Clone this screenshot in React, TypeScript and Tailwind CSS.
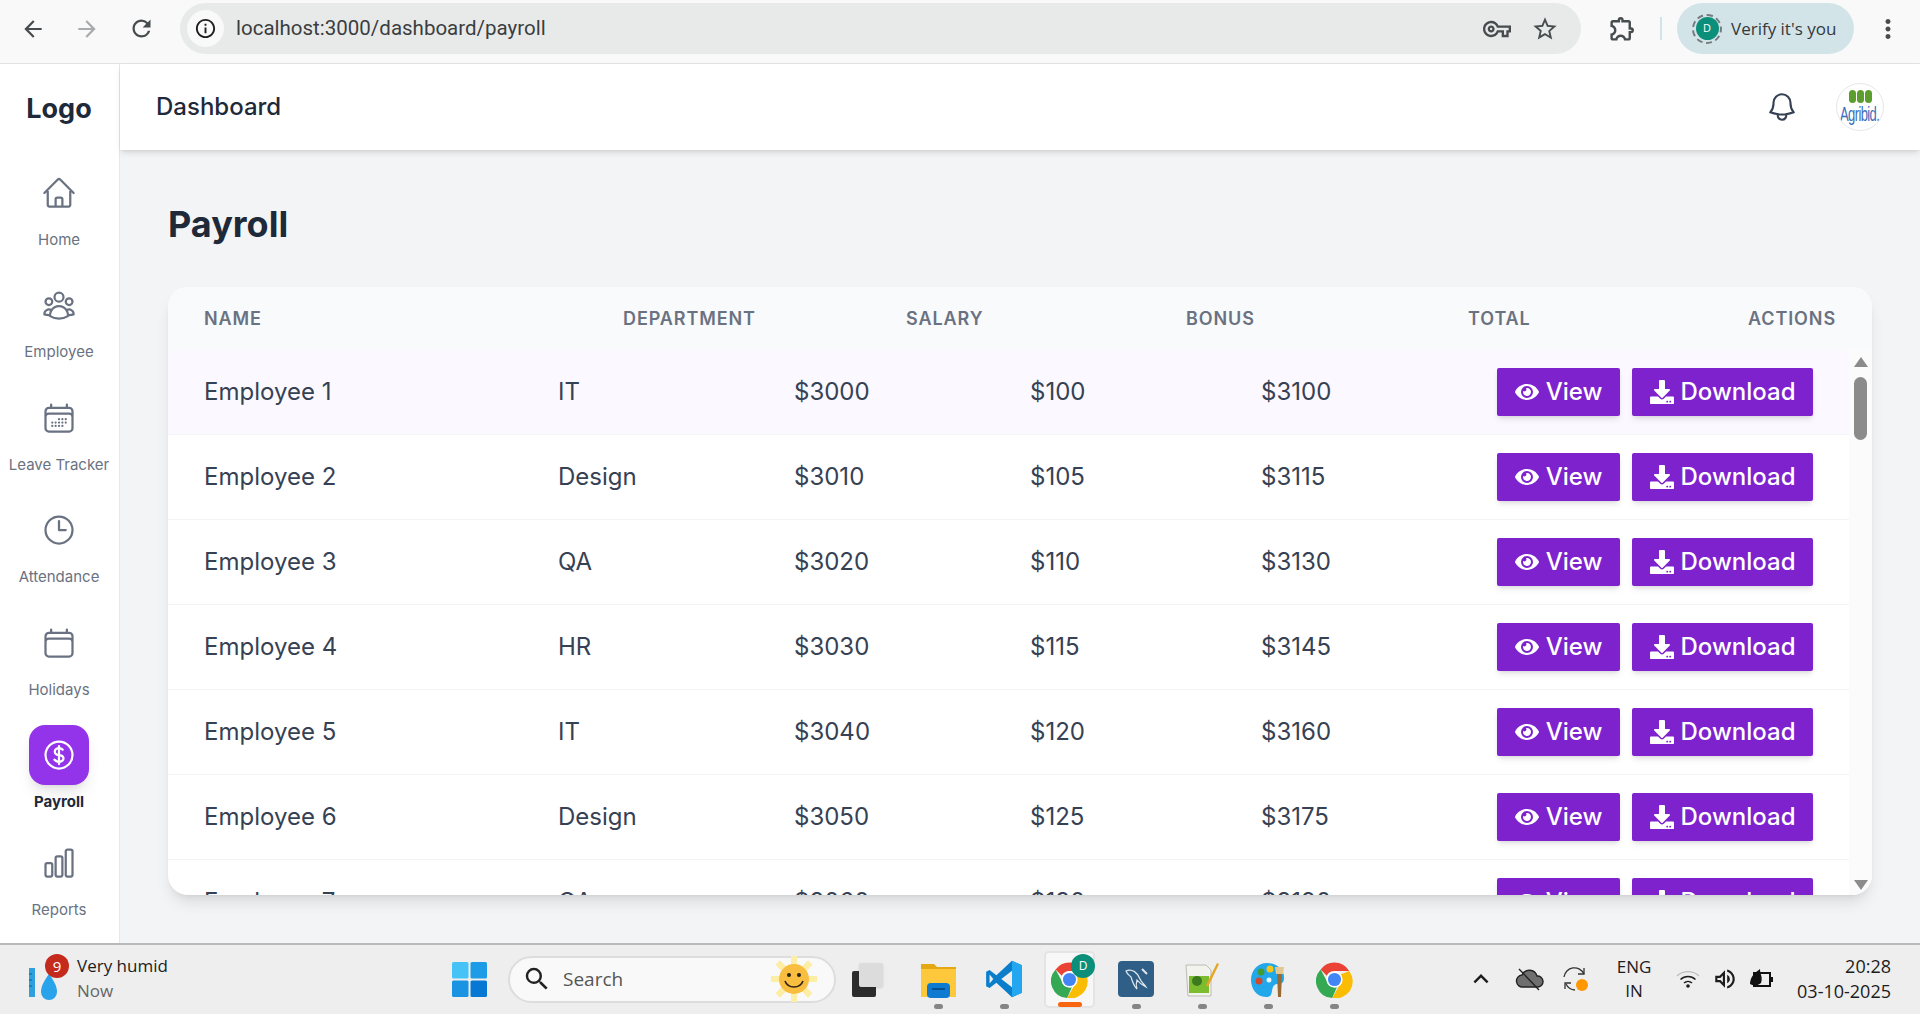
import {
  HiOutlineHome,
  HiOutlineUserGroup,
  HiOutlineCalendarDays,
  HiOutlineClock,
  HiOutlineCalendar,
  HiOutlineCurrencyDollar,
  HiOutlineChartBar,
  HiOutlineBell,
} from "react-icons/hi2";
import { FaEye, FaDownload } from "react-icons/fa";
import {
  MdArrowBack,
  MdArrowForward,
  MdRefresh,
  MdInfoOutline,
  MdOutlineVpnKey,
  MdStarBorder,
  MdOutlineExtension,
  MdMoreVert,
  MdSearch,
  MdKeyboardArrowUp,
  MdOutlineVolumeUp,
} from "react-icons/md";

const navItems = [
  { icon: HiOutlineHome, label: "Home" },
  { icon: HiOutlineUserGroup, label: "Employee" },
  { icon: HiOutlineCalendarDays, label: "Leave Tracker" },
  { icon: HiOutlineClock, label: "Attendance" },
  { icon: HiOutlineCalendar, label: "Holidays" },
  { icon: HiOutlineCurrencyDollar, label: "Payroll", active: true },
  { icon: HiOutlineChartBar, label: "Reports" },
];

const departments = ["IT", "Design", "QA", "HR"];

const employees = Array.from({ length: 7 }, (_, i) => ({
  name: `Employee ${i + 1}`,
  department: departments[i % 4],
  salary: 3000 + i * 10,
  bonus: 100 + i * 5,
}));

function ChromeLogo({ size = 37 }: { size?: number }) {
  return (
    <svg width={size} height={size} viewBox="0 0 48 48">
      <path d="M24 2a22 22 0 0 1 19 11H24a11 11 0 0 0-10 6L6 11A22 22 0 0 1 24 2z" fill="#ea4335" />
      <path d="M6 11l9 17a11 11 0 0 0 12 6l-6 14A22 22 0 0 1 6 11z" fill="#34a853" />
      <path d="M43 13a22 22 0 0 1-22 35l9-16a11 11 0 0 0 0-14z" fill="#fbbc04" />
      <circle cx="24" cy="24" r="10.5" fill="#fff" />
      <circle cx="24" cy="24" r="8.5" fill="#4285f4" />
    </svg>
  );
}

function BrowserBar() {
  return (
    <div className="flex h-[64px] shrink-0 items-center border-b border-[#dfe1e2] bg-[#f9f9fa] pb-[6px] font-['Open_Sans',sans-serif]">
      <div className="flex w-[180px] shrink-0 items-center pl-[20px] text-[#474c4f]">
        <MdArrowBack className="h-[26px] w-[26px]" />
        <MdArrowForward className="ml-[28px] h-[26px] w-[26px] text-[#a8abad]" />
        <MdRefresh className="ml-[28px] h-[27px] w-[27px]" />
      </div>
      <div className="flex h-[51px] w-[1401px] shrink-0 items-center rounded-full bg-[#e8eaea] pl-[7px] pr-[22px]">
        <div className="flex h-[37px] w-[37px] items-center justify-center rounded-full bg-[#f9f9fa]">
          <MdInfoOutline className="h-[23px] w-[23px] text-[#1f1f1f]" />
        </div>
        <span className="ml-[12px] font-['Roboto',sans-serif] text-[20.5px] text-[#3b3d3f]">
          localhost:3000/dashboard/payroll
        </span>
        <MdOutlineVpnKey className="ml-auto h-[28px] w-[28px] text-[#474c4f]" />
        <MdStarBorder className="ml-[20px] h-[28px] w-[28px] text-[#474c4f]" />
      </div>
      <MdOutlineExtension className="ml-[27px] h-[29px] w-[29px] text-[#474c4f]" />
      <div className="ml-[23px] h-[23px] w-[2px] bg-[#d3e4e9]" />
      <div className="ml-[15px] flex h-[51px] w-[177px] items-center rounded-full bg-[#d3e4e9] pl-[15px]">
        <div className="flex h-[30px] w-[30px] items-center justify-center rounded-full border-2 border-dashed border-[#757b7e]">
          <div className="flex h-[23px] w-[23px] items-center justify-center rounded-full bg-[#0b8f7a] text-[11px] text-white">
            D
          </div>
        </div>
        <span className="ml-[9px] text-[17px] text-[#33393c]">Verify it's you</span>
      </div>
      <MdMoreVert className="ml-[19px] h-[30px] w-[30px] text-[#474c4f]" />
    </div>
  );
}

function Sidebar() {
  return (
    <aside className="flex w-[120px] shrink-0 flex-col border-r border-[#e5e7eb] bg-white pr-[1px]">
      <div className="flex h-[86px] items-center justify-center pt-[5px] text-[27px] font-bold text-gray-800">
        Logo
      </div>
      <nav className="flex flex-col gap-[25.5px] pt-[12.5px]">
        {navItems.map(({ icon: Icon, label, active }) => (
          <div
            key={label}
            className={
              active
                ? "-mb-[5px] flex flex-col items-center gap-[7px]"
                : "flex flex-col items-center gap-[7px]"
            }
          >
            <div
              className={
                active
                  ? "flex h-[60px] w-[60px] items-center justify-center rounded-2xl bg-[#9333ea] text-white shadow-lg"
                  : "flex h-[60px] w-[60px] items-center justify-center text-gray-500"
              }
            >
              <Icon className="h-[36px] w-[36px]" />
            </div>
            <span
              className={
                active
                  ? "text-[15px] leading-5 font-bold text-gray-800"
                  : "text-[15px] leading-5 whitespace-nowrap text-gray-500"
              }
            >
              {label}
            </span>
          </div>
        ))}
      </nav>
    </aside>
  );
}

function Topbar() {
  return (
    <header className="z-10 flex h-[86px] shrink-0 items-center bg-white pl-[36px] pr-[36px] shadow-md">
      <h1 className="text-[24px] font-medium text-gray-800">Dashboard</h1>
      <HiOutlineBell className="ml-auto h-[34px] w-[34px] text-gray-700" />
      <div className="ml-[37px] flex h-[48px] w-[48px] flex-col items-center justify-center overflow-hidden rounded-full border border-gray-200 bg-white">
        <div className="flex gap-[1px]">
          <span className="h-[13px] w-[7px] rounded-full bg-[#5c9e2e]" />
          <span className="h-[13px] w-[7px] rounded-full bg-[#5c9e2e]" />
          <span className="h-[13px] w-[7px] rounded-full bg-[#5c9e2e]" />
        </div>
        <span className="scale-x-[0.62] font-['Liberation_Sans',sans-serif] text-[21px] leading-[22px] tracking-[-1px] text-[#3f6dbb]">
          Agribid.
        </span>
      </div>
    </header>
  );
}

function ActionButtons() {
  return (
    <div className="flex justify-end gap-[12px] pr-[36px]">
      <button className="flex h-[48px] w-[123px] items-center justify-center gap-[7px] rounded-[2px] bg-[#7e22ce] text-[24px] font-medium text-white shadow-md">
        <FaEye className="h-[24px] w-[24px]" />
        View
      </button>
      <button className="flex h-[48px] w-[181px] items-center justify-center gap-[7px] rounded-[2px] bg-[#7e22ce] text-[24px] font-medium text-white shadow-md">
        <FaDownload className="h-[24px] w-[24px]" />
        Download
      </button>
    </div>
  );
}

function PayrollTable() {
  return (
    <div className="flex h-[608px] flex-col overflow-hidden rounded-[20px] bg-white shadow-lg">
      <div className="grid h-[63px] shrink-0 grid-cols-[419px_283px_280px_282px_200px_1fr] items-center bg-[#f9fafb] pl-[36px] pr-[36px] text-[18px] font-semibold tracking-wider text-gray-500 uppercase">
        <span>Name</span>
        <span>Department</span>
        <span>Salary</span>
        <span>Bonus</span>
        <span>Total</span>
        <span className="text-right">Actions</span>
      </div>
      <div className="flex min-h-0 flex-1">
        <div className="min-w-0 flex-1 overflow-hidden">
          {employees.map((e, i) => (
            <div
              key={e.name}
              className={
                i === 0
                  ? "grid h-[85px] grid-cols-[354px_236px_236px_231px_150px_1fr] items-center border-b border-gray-100 bg-[#fbf9ff] pl-[36px] text-[24px] text-gray-700"
                  : "grid h-[85px] grid-cols-[354px_236px_236px_231px_150px_1fr] items-center border-b border-gray-100 pl-[36px] text-[24px] text-gray-700"
              }
            >
              <span>{e.name}</span>
              <span>{e.department}</span>
              <span>${e.salary}</span>
              <span>${e.bonus}</span>
              <span>${e.salary + e.bonus}</span>
              <ActionButtons />
            </div>
          ))}
        </div>
        {/* classic windows scrollbar */}
        <div className="flex w-[23px] shrink-0 flex-col items-center bg-[#fbfbfb] pt-[7px] pb-[5px]">
          <div className="h-0 w-0 border-x-[7px] border-b-[10px] border-x-transparent border-b-[#8b8b8b]" />
          <div className="mt-[10px] h-[63px] w-[13px] rounded-full bg-[#8b8b8b]" />
          <div className="mt-auto h-0 w-0 border-x-[7px] border-t-[10px] border-x-transparent border-t-[#8b8b8b]" />
        </div>
      </div>
    </div>
  );
}

function WindowsLogo() {
  return (
    <svg width="35" height="35" viewBox="0 0 35 35">
      <rect x="0" y="0" width="16.5" height="16.5" rx="1.5" fill="#45c3f7" />
      <rect x="18.5" y="0" width="16.5" height="16.5" rx="1.5" fill="#1d9be6" />
      <rect x="0" y="18.5" width="16.5" height="16.5" rx="1.5" fill="#1a94e2" />
      <rect x="18.5" y="18.5" width="16.5" height="16.5" rx="1.5" fill="#0678d4" />
    </svg>
  );
}

function SunFace() {
  const rays = [0, 45, 90, 135, 180, 225, 270, 315];
  return (
    <svg width="58" height="46" viewBox="0 0 58 46">
      {rays.map((r) => (
        <rect key={r} x="26" y="0" width="6" height="46" fill="#fdeea6" transform={`rotate(${r} 29 23)`} />
      ))}
      <circle cx="29" cy="23" r="15" fill="#f9bd3f" />
      <circle cx="24" cy="19" r="2" fill="#2b2118" />
      <circle cx="34" cy="19" r="2" fill="#2b2118" />
      <path d="M20 25c3 8 15 8 18 0" fill="none" stroke="#2b2118" strokeWidth="1.6" />
    </svg>
  );
}

function TaskIcon({ children }: { children: React.ReactNode }) {
  return (
    <div className="relative flex h-full w-[66px] items-center justify-center">
      {children}
      <span className="absolute bottom-[4px] h-[5px] w-[9px] rounded-full bg-[#858585]" />
    </div>
  );
}

function Taskbar() {
  return (
    <div className="flex h-[71px] shrink-0 items-center border-t-2 border-[#b9b9b9] bg-[#eeeeee] pb-[1px] font-['Open_Sans',sans-serif] text-[#1c1c1c]">
      {/* weather */}
      <div className="flex w-[452px] shrink-0 items-center pl-[29px]">
        <svg width="48" height="50" viewBox="0 0 48 50">
          <rect x="0" y="14" width="6" height="29" fill="#2f9fe0" />
          <path d="M0 20h3M0 26h3M0 32h3" stroke="#0f5e92" strokeWidth="1" />
          <path d="M20 20c5 7 8 12 8 18a8 8 0 0 1-16 0c0-6 3-11 8-18z" fill="#29a3ea" />
          <circle cx="28" cy="12" r="12" fill="#c42b1c" />
          <text x="28" y="17.500" textAnchor="middle" fontSize="15" fill="#ffffff">
            9
          </text>
        </svg>
        <div className="-mt-[2px] leading-[25px]">
          <div className="text-[17px]">Very humid</div>
          <div className="text-[17px] text-[#666666]">Now</div>
        </div>
      </div>

      <WindowsLogo />

      {/* search */}
      <div className="ml-[21px] flex h-[47px] w-[328px] shrink-0 items-center rounded-full border-2 border-[#dddddd] bg-[#f9f9f9] pl-[12px] pr-[11px]">
        <MdSearch className="h-[30px] w-[30px] text-[#222222]" />
        <span className="ml-[11px] text-[19px] text-[#555555]">Search</span>
        <div className="ml-auto">
          <SunFace />
        </div>
      </div>

      {/* pinned apps */}
      <div className="ml-[8px] flex h-full items-center">
        <div className="relative flex h-full w-[45px] items-center justify-center">
          <span className="absolute left-[8px] top-[26px] h-[26px] w-[24px] rounded-[2px] bg-[#2c2c2c]" />
          <span className="absolute left-[15px] top-[18px] h-[24px] w-[24px] rounded-[2px] bg-[#dcdcdc] shadow-sm" />
        </div>
        <div className="w-[16px]" />
        <TaskIcon>
          <svg width="37" height="37" viewBox="0 0 37 37">
            <path d="M1 3h13l3 3h19v30H1z" fill="#e5a812" />
            <path d="M1 8h35v28H1z" fill="#fdc83c" />
            <rect x="7" y="22" width="23" height="15" rx="4" fill="#0f7ad1" />
            <rect x="12" y="27" width="13" height="2" fill="#07508f" />
          </svg>
        </TaskIcon>
        <TaskIcon>
          <svg width="38" height="38" viewBox="0 0 100 100">
            <path d="M71 2L30 40 12 26 3 31v38l9 5 18-14 41 38 26-12V14z" fill="#0a7ecb" />
            <path d="M71 2l26 12v72L71 98z" fill="#22a7f0" />
            <path d="M71 28L43 50l28 22z" fill="#eeeeee" />
            <path d="M12 38l10 12-10 12z" fill="#eeeeee" />
          </svg>
        </TaskIcon>
        <div className="w-[7px]" />
        <div className="relative flex h-[57px] w-[51px] items-center justify-center rounded-[5px] border-2 border-[#e4e4e4] bg-[#f7f7f7]">
          <ChromeLogo />
          <span className="absolute right-[-2px] top-[1px] flex h-[24px] w-[24px] items-center justify-center rounded-full bg-[#0b8f7a] text-[12px] text-white">
            D
          </span>
          <span className="absolute bottom-[-1px] h-[5px] w-[24px] rounded-full bg-[#f9640f]" />
        </div>
        <div className="w-[8px]" />
        <TaskIcon>
          <div className="flex h-[36px] w-[36px] items-center justify-center rounded-[4px] bg-[#2f5f86]">
            <svg width="30" height="30" viewBox="0 0 30 30">
              <path d="M5 7c6-3 12 2 14 8 1 3 4 5 6 8-4-2-6-3-9-7-1 3-1 6 0 9-4-4-5-9-6-12-2-2-4-3-5-6z" fill="none" stroke="#dfe8ee" strokeWidth="1.2" />
              <path d="M21 5l5 5" stroke="#dfe8ee" strokeWidth="2" />
            </svg>
          </div>
        </TaskIcon>
        <TaskIcon>
          <svg width="36" height="37" viewBox="0 0 36 37">
            <path d="M2 4h20l5 5v26H4z" fill="#f3f3ee" stroke="#bcbcb4" />
            <rect x="5" y="15" width="20" height="17" fill="#7dbb2f" />
            <circle cx="13" cy="20" r="5" fill="#3c7a1e" />
            <path d="M22 24L33 2l2 1-11 23z" fill="#e6a525" />
          </svg>
        </TaskIcon>
        <TaskIcon>
          <svg width="36" height="37" viewBox="0 0 36 37">
            <path d="M17 2c9 0 18 6 17 16-1 8-8 2-11 8-2 5 0 10-7 10C6 36 1 27 1 19 1 9 8 2 17 2z" fill="#22a7ea" />
            <circle cx="9" cy="20" r="3.5" fill="#d4472b" />
            <circle cx="11" cy="11" r="3.5" fill="#3f9b35" />
            <circle cx="20" cy="8" r="3.5" fill="#f5c518" />
            <circle cx="19" cy="19" r="2.5" fill="#e8f6fd" />
            <path d="M27 12h5l-1 24h-3z" fill="#9a6a33" />
            <path d="M25 6h9l-1 7h-7z" fill="#e2c792" />
          </svg>
        </TaskIcon>
        <TaskIcon>
          <ChromeLogo />
        </TaskIcon>
      </div>

      {/* system tray */}
      <div className="ml-auto flex items-center pr-[29px]">
        <MdKeyboardArrowUp className="h-[30px] w-[30px]" />
        <svg className="ml-[19px]" width="30" height="24" viewBox="0 0 30 24">
          <path d="M8 20a6 6 0 0 1-1-12 8 8 0 0 1 15 1 5.500 5.500 0 0 1 1 11z" fill="#6f6f6f" stroke="#222222" strokeWidth="1.4" />
          <path d="M4 2l20 21" stroke="#222222" strokeWidth="1.4" />
        </svg>
        <svg className="ml-[16px]" width="28" height="28" viewBox="0 0 28 28">
          <path d="M3 12a10.500 10.500 0 0 1 20-3" fill="none" stroke="#333333" strokeWidth="1.3" />
          <path d="M23 3v6h-6" fill="none" stroke="#333333" strokeWidth="1.3" />
          <path d="M14 25a10.500 10.500 0 0 1-9-6" fill="none" stroke="#333333" strokeWidth="1.3" />
          <path d="M4 24v-6h6" fill="none" stroke="#333333" strokeWidth="1.3" />
          <circle cx="21" cy="20" r="6" fill="#ff9800" />
        </svg>
        <div className="ml-[25px] w-[40px] text-center text-[17px] leading-[24px]">
          <div>ENG</div>
          <div>IN</div>
        </div>
        <svg className="ml-[22px]" width="24" height="20" viewBox="0 0 24 20">
          <path d="M1 7a16 16 0 0 1 22 0" fill="none" stroke="#bdbdbd" strokeWidth="1.3" />
          <path d="M4.500 10.500a11 11 0 0 1 15 0" fill="none" stroke="#1c1c1c" strokeWidth="1.5" />
          <path d="M8 14a6 6 0 0 1 8 0" fill="none" stroke="#1c1c1c" strokeWidth="1.5" />
          <circle cx="12" cy="17" r="1.800" fill="#1c1c1c" />
        </svg>
        <MdOutlineVolumeUp className="ml-[12px] h-[26px] w-[26px]" />
        <svg className="ml-[10px]" width="26" height="22" viewBox="0 0 26 22">
          <rect x="6" y="5" width="16" height="13" fill="none" stroke="#111111" strokeWidth="2" />
          <rect x="23" y="9" width="2" height="5" fill="#111111" />
          <path d="M2 16C2 8 8 4 12 1c0 6 3 7 1 14-3 3-8 3-11 1z" fill="#111111" />
        </svg>
        <div className="ml-[23px] text-right text-[18px] leading-[25px]">
          <div>20:28</div>
          <div>03-10-2025</div>
        </div>
      </div>
    </div>
  );
}

export default function App() {
  return (
    <div className="flex h-screen w-full flex-col overflow-hidden bg-[#f3f4f6] font-['Inter',sans-serif]">
      <BrowserBar />
      <div className="flex min-h-0 flex-1">
        <Sidebar />
        <div className="flex min-w-0 flex-1 flex-col">
          <Topbar />
          <main className="flex-1 px-[48px] pt-[54px]">
            <h2 className="mb-[43px] text-[36px] leading-[40px] font-bold text-gray-800">Payroll</h2>
            <PayrollTable />
          </main>
        </div>
      </div>
      <Taskbar />
    </div>
  );
}
